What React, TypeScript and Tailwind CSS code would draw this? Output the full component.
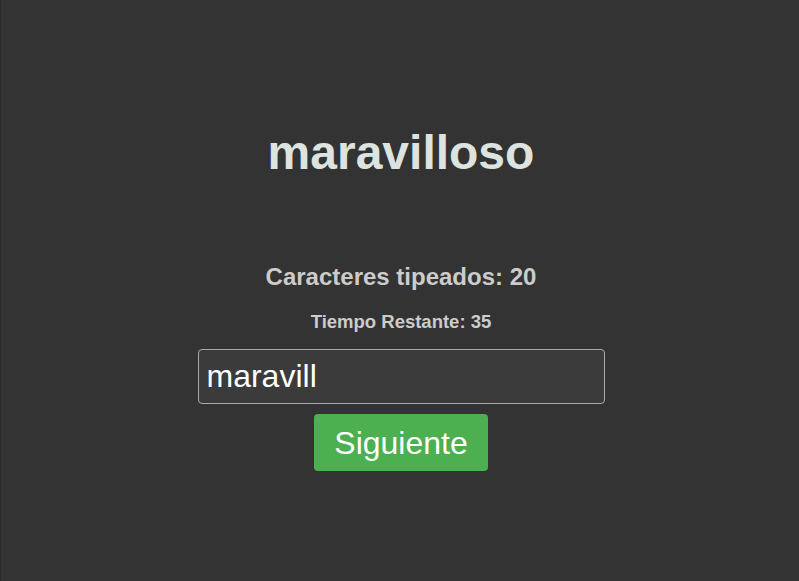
import React from "react";

export default function App() {
  const [value, setValue] = React.useState("maravill");

  return (
    <div
      className="min-h-[581px] w-full bg-[#333333] border-l border-[#2a2a2a] pl-[2px] flex flex-col items-center"
      style={{ fontFamily: '"Liberation Sans", Arial, sans-serif' }}
    >
      <h1 className="mt-[125px] text-[48px] leading-[56px] font-bold text-[#dde3df]">maravilloso</h1>

      <div className="mt-[82px] text-[24px] leading-[28px] font-bold text-[#cccccc]">
        Caracteres tipeados: 20
      </div>
      <div className="mt-[20px] text-[18.5px] leading-[22px] font-bold text-[#cccccc]">
        Tiempo Restante: 35
      </div>

      <input
        value={value}
        onChange={(e) => setValue(e.target.value)}
        className="mt-[16px] w-[407px] h-[55px] rounded-[4px] border border-[#aaaaaa] bg-[#3b3b3b] px-[8px] text-[32px] text-white outline-none"
        style={{ fontFamily: '"Liberation Sans", Arial, sans-serif' }}
      />

      <button
        className="mt-[10px] h-[57px] px-[20px] rounded-[4px] bg-[#4caf50] text-[32px] leading-none text-white"
        style={{ fontFamily: '"Liberation Sans", Arial, sans-serif' }}
      >
        Siguiente
      </button>
    </div>
  );
}
